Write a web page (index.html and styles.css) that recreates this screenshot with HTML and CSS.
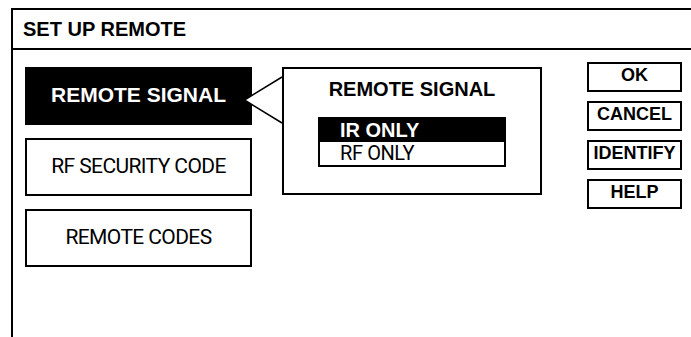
FILE: index.html
```html
<!DOCTYPE html>
<html lang="en">
  <head>
    <meta charset="UTF-8" />
    <meta name="viewport" content="width=device-width, initial-scale=1.0" />
    <title>Set Up Remote</title>
    <link rel="stylesheet" href="styles.css">
  </head>
  <body>
    <div class="frame">
      <div class="title">SET UP REMOTE</div>
      <div class="content">
        <div class="menu">
          <div class="menu-btn active">REMOTE SIGNAL</div>
          <div class="menu-btn">RF SECURITY CODE</div>
          <div class="menu-btn">REMOTE CODES</div>
        </div>
        <div class="popup">
          <svg class="pointer" width="40" height="50" viewBox="0 0 40 50">
            <path d="M40 2 L2.5 25 L40 48" fill="#fff" stroke="#000" stroke-width="1.5" />
          </svg>
          <div class="popup-title">REMOTE SIGNAL</div>
          <div class="list">
            <div class="item selected">IR ONLY</div>
            <div class="item">RF ONLY</div>
          </div>
        </div>
        <div class="actions">
          <div class="act">OK</div>
          <div class="act">CANCEL</div>
          <div class="act">IDENTIFY</div>
          <div class="act">HELP</div>
        </div>
      </div>
    </div>
  </body>
</html>
```

FILE: styles.css
```css
* {
  box-sizing: border-box;
}
body {
  margin: 0;
  background: #fff;
  color: #000;
  overflow: hidden;
  font-family: "Liberation Sans", Arial, sans-serif;
}
.frame {
  margin: 8px 0 0 11px;
  width: 700px;
  height: 340px;
  border: 2px solid #000;
}
.title {
  height: 40px;
  border-bottom: 2px solid #000;
  padding-left: 10px;
  display: flex;
  align-items: center;
  font-size: 20px;
  font-weight: bold;
}
.content {
  display: flex;
  align-items: flex-start;
  padding: 12px 0 0 12px;
}
.menu {
  display: flex;
  flex-direction: column;
  gap: 13px;
  width: 227px;
  margin-top: 5px;
}
.menu-btn {
  height: 58px;
  border: 2px solid #000;
  display: flex;
  align-items: center;
  justify-content: center;
  padding-bottom: 3px;
  font-family: Roboto, "Liberation Sans", sans-serif;
  font-size: 21px;
  letter-spacing: -0.6px;
}
.menu-btn.active {
  background: #000;
  color: #fff;
  font-family: "Liberation Sans", Arial, sans-serif;
  font-weight: bold;
  letter-spacing: 0;
}
.popup {
  position: relative;
  width: 260px;
  height: 128px;
  margin: 5px 0 0 30px;
  border: 2px solid #000;
}
.pointer {
  position: absolute;
  left: -42px;
  top: 6px;
}
.popup-title {
  text-align: center;
  font-size: 20px;
  line-height: 24px;
  font-weight: bold;
  margin-top: 8px;
}
.list {
  width: 188px;
  margin: 16px auto 0;
  border: 2px solid #000;
}
.item {
  height: 23px;
  line-height: 23px;
  padding-left: 20px;
  font-family: Roboto, "Liberation Sans", sans-serif;
  font-size: 20px;
  letter-spacing: -0.4px;
}
.item.selected {
  background: #000;
  color: #fff;
  font-family: "Liberation Sans", Arial, sans-serif;
  font-weight: bold;
  letter-spacing: 0;
}
.actions {
  display: flex;
  flex-direction: column;
  gap: 9px;
  margin-left: 45px;
}
.act {
  width: 95px;
  height: 30px;
  border: 2px solid #000;
  display: flex;
  align-items: center;
  justify-content: center;
  padding-bottom: 3px;
  font-size: 18px;
  font-weight: bold;
}
```
